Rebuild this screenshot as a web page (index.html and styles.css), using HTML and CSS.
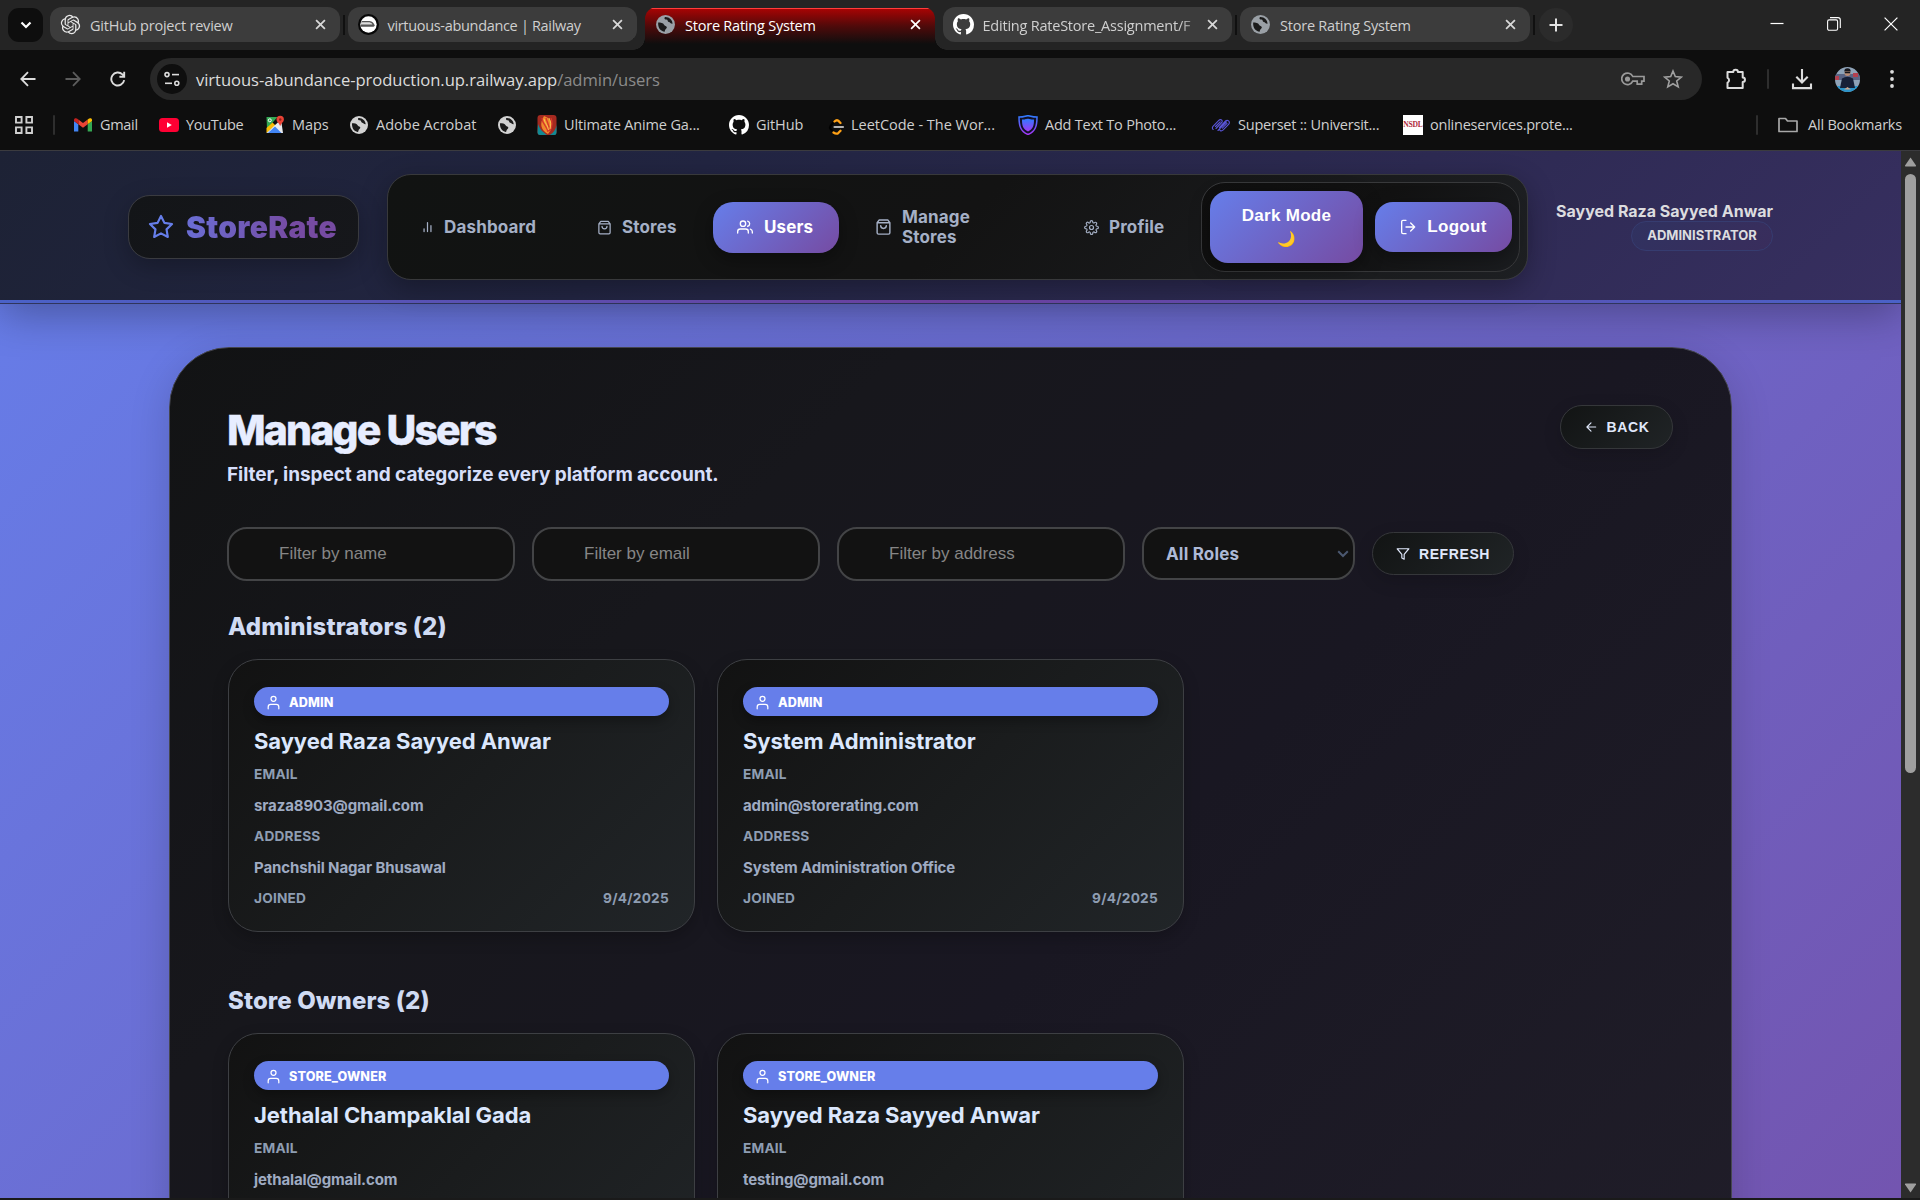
FILE: index.html
```html
<!DOCTYPE html>
<html lang="en">
<head>
<meta charset="utf-8">
<title>Store Rating System</title>
<link rel="stylesheet" href="styles.css">
</head>
<body>
<svg class="defs" width="0" height="0" aria-hidden="true">
  <defs>
    <linearGradient id="shieldFill" x1="0" y1="0" x2="0" y2="1"><stop offset="0" stop-color="#2f7bff"/><stop offset="1" stop-color="#a436f5"/></linearGradient>
  </defs>
  <symbol id="close" viewBox="0 0 12 12"><path d="M1.2 1.2l9.6 9.6M10.8 1.2l-9.6 9.6" fill="none" stroke="currentColor" stroke-width="1.9"/></symbol>
  <symbol id="globe" viewBox="0 0 20 20"><circle cx="10" cy="10" r="9" fill="currentColor"/><path d="M3 8.200c2.200 0 5 .3 5.600 2 .5 1.500 2.500.8 2.700 2.400.1 1.300-1.500 1.600-1.800 2.800-.2.900-.2 1.500-.8 1.500C5 16.200 2.700 13 3 8.200zM9.300 3c-.8 1.400.1 2.300 1.500 2.300 1.600 0 .9 2 2.300 2.400 1.400.3 1.700 1.700 3.600 1.500C16.500 5.800 13.500 2.600 9.300 3z" fill="#1b1b1b"/></symbol>
  <symbol id="github" viewBox="0 0 16 16"><path fill="currentColor" d="M8 0C3.580 0 0 3.580 0 8c0 3.540 2.290 6.530 5.470 7.590.4.070.55-.17.55-.38 0-.19-.01-.82-.01-1.490-2.010.37-2.530-.49-2.690-.94-.09-.23-.48-.94-.82-1.130-.28-.15-.68-.52-.01-.53.63-.01 1.080.58 1.230.82.72 1.210 1.870.87 2.330.66.070-.52.28-.87.51-1.070-1.780-.2-3.640-.89-3.640-3.950 0-.87.31-1.590.82-2.150-.08-.2-.36-1.020.08-2.120 0 0 .67-.21 2.200.82.64-.18 1.320-.27 2-.27s1.360.09 2 .27c1.530-1.040 2.200-.82 2.200-.82.44 1.100.16 1.920.08 2.120.51.56.82 1.270.82 2.150 0 3.070-1.870 3.750-3.650 3.950.29.25.54.73.54 1.480 0 1.070-.01 1.930-.01 2.200 0 .21.15.46.55.38A8.010 8.010 0 0 0 16 8c0-4.420-3.580-8-8-8z"/></symbol>
  <symbol id="bag" viewBox="0 0 24 24"><path d="M6 2 3 6v14a2 2 0 0 0 2 2h14a2 2 0 0 0 2-2V6l-3-4zM3 6h18M16 10a4 4 0 0 1-8 0" fill="none" stroke="currentColor" stroke-width="2" stroke-linecap="round" stroke-linejoin="round"/></symbol>
  <symbol id="person" viewBox="0 0 24 24"><path d="M20.500 22v-3a4 4 0 0 0-4-4h-9a4 4 0 0 0-4 4v3M16 6a4 4 0 1 1-8 0 4 4 0 0 1 8 0z" fill="none" stroke="currentColor" stroke-width="2" stroke-linecap="round" stroke-linejoin="round"/></symbol>
</svg>

<div class="browser">
  <div class="tabstrip">
    <div class="tab-search"><svg width="12" height="8" viewBox="0 0 12 8"><path d="M1.500 1.500 6 6l4.500-4.500" fill="none" stroke="#fff" stroke-width="2.200"/></svg></div>
    <div class="tabs">
      <div class="tab">
        <svg class="fav" viewBox="-1 -1 26 26"><path fill="#e8e8e8" d="M22.2819 9.8211a5.9847 5.9847 0 0 0-.5157-4.9108 6.0462 6.0462 0 0 0-6.5098-2.9A6.0651 6.0651 0 0 0 4.9807 4.1818a5.9847 5.9847 0 0 0-3.9977 2.9 6.0462 6.0462 0 0 0 .7427 7.0966 5.98 5.98 0 0 0 .511 4.9107 6.051 6.051 0 0 0 6.5146 2.9001A5.9847 5.9847 0 0 0 13.2599 24a6.0557 6.0557 0 0 0 5.7718-4.2058 5.9894 5.9894 0 0 0 3.9977-2.9001 6.0557 6.0557 0 0 0-.7475-7.0729zm-9.022 12.6081a4.4755 4.4755 0 0 1-2.8764-1.0408l.1419-.0804 4.7783-2.7582a.7948.7948 0 0 0 .3927-.6813v-6.7369l2.02 1.1686a.071.071 0 0 1 .038.052v5.5826a4.504 4.504 0 0 1-4.4945 4.4944zm-9.6607-4.1254a4.4708 4.4708 0 0 1-.5346-3.0137l.142.0852 4.783 2.7582a.7712.7712 0 0 0 .7806 0l5.8428-3.3685v2.3324a.0804.0804 0 0 1-.0332.0615L9.74 19.9502a4.4992 4.4992 0 0 1-6.1408-1.6464zM2.3408 7.8956a4.485 4.485 0 0 1 2.3655-1.9728V11.6a.7664.7664 0 0 0 .3879.6765l5.8144 3.3543-2.0201 1.1685a.0757.0757 0 0 1-.071 0l-4.8303-2.7865A4.504 4.504 0 0 1 2.3408 7.872zm16.5963 3.8558L13.1038 8.364 15.1192 7.2a.0757.0757 0 0 1 .071 0l4.8303 2.7913a4.4944 4.4944 0 0 1-.6765 8.1042v-5.6772a.79.79 0 0 0-.407-.667zm2.0107-3.0231l-.142-.0852-4.7735-2.7818a.7759.7759 0 0 0-.7854 0L9.409 9.2297V6.8974a.0662.0662 0 0 1 .0284-.0615l4.8303-2.7866a4.4992 4.4992 0 0 1 6.6802 4.66zM8.3065 12.863l-2.02-1.1638a.0804.0804 0 0 1-.038-.0567V6.0742a4.4992 4.4992 0 0 1 7.3757-3.4537l-.142.0805L8.704 5.459a.7948.7948 0 0 0-.3927.6813zm1.0976-2.3654l2.602-1.4998 2.6069 1.4998v2.9994l-2.5974 1.4997-2.6067-1.4997Z"/></svg>
        <span class="tab-title">GitHub project review</span><svg class="tab-close"><use href="#close"/></svg>
      </div>
      <div class="tab divided">
        <svg class="fav" viewBox="0 0 20 20"><circle cx="10" cy="10" r="10" fill="#080808"/><circle cx="10" cy="10" r="7.800" fill="#fff"/><path d="M3.500 6.700h7.500q4 .6 5 4.500l-1.200.9H2.300z" fill="#555"/><path d="M3.200 7.900h7.800q2.500.7 2.800 2.200H2.500z" fill="#ddd"/></svg>
        <span class="tab-title t-tight">virtuous-abundance | Railway</span><svg class="tab-close"><use href="#close"/></svg>
      </div>
      <div class="tab active">
        <svg class="fav grey"><use href="#globe"/></svg>
        <span class="tab-title">Store Rating System</span><svg class="tab-close"><use href="#close"/></svg>
      </div>
      <div class="tab">
        <svg class="fav white"><use href="#github"/></svg>
        <span class="tab-title fade">Editing RateStore_Assignment/F</span><svg class="tab-close"><use href="#close"/></svg>
      </div>
      <div class="tab divided">
        <svg class="fav grey"><use href="#globe"/></svg>
        <span class="tab-title">Store Rating System</span><svg class="tab-close"><use href="#close"/></svg>
      </div>
    </div>
    <div class="new-tab"><svg width="14" height="14" viewBox="0 0 14 14"><path d="M7 .5v13M.5 7h13" stroke="#e3e3e3" stroke-width="2"/></svg></div>
    <div class="window-buttons">
      <svg width="14" height="16" viewBox="0 0 14 16"><path d="M.5 7.500h13" stroke="#fff" stroke-width="1.200"/></svg>
      <svg width="14" height="14" viewBox="0 0 14 14"><rect x=".6" y="2.900" width="10" height="10.300" rx="1.500" fill="none" stroke="#fff" stroke-width="1.100"/><path d="M3 .6h8a2.300 2.300 0 0 1 2.300 2.300v8" fill="none" stroke="#fff" stroke-width="1.100"/></svg>
      <svg width="14" height="14" viewBox="0 0 14 14"><path d="M.6.6l12.800 12.800M13.400.6.6 13.400" stroke="#fff" stroke-width="1.200"/></svg>
    </div>
  </div>

  <div class="toolbar">
    <div class="nav-buttons">
      <svg width="16" height="16" viewBox="0 0 16 16"><path d="M15.500 8H1.500M8 1.200 1.300 8 8 14.800" fill="none" stroke="#dcdcdc" stroke-width="1.800"/></svg>
      <svg width="16" height="16" viewBox="0 0 16 16"><path d="M.5 8h14M8 1.200 14.700 8 8 14.800" fill="none" stroke="#5c5c5c" stroke-width="1.800"/></svg>
      <svg width="16" height="16" viewBox="0 0 16 16"><path d="M14.200 9.200A6.500 6.500 0 1 1 12.400 3.400L14.200 5.200M14.200.8v4.900H9.400" fill="none" stroke="#dcdcdc" stroke-width="1.900"/></svg>
    </div>
    <div class="omnibox">
      <div class="site-info"><svg width="16" height="16" viewBox="0 0 16 16" fill="none" stroke="#dcdcdc" stroke-width="1.600"><circle cx="3" cy="3.600" r="2"/><path d="M8 3.600h7"/><circle cx="12.800" cy="12.300" r="2"/><path d="M1 12.300h7"/></svg></div>
      <div class="url">virtuous-abundance-production.up.railway.app<span class="path">/admin/users</span></div>
      <svg class="key" width="24" height="16" viewBox="0 0 24 16" fill="none" stroke="#9a9a9a" stroke-width="1.700"><path d="M11.800 5.500H23v4.700h-2.300v3h-4.500v-3h-4.400a5.800 5.800 0 1 1 0-4.700z"/><circle cx="6.500" cy="8" r="1.700" fill="#9a9a9a"/></svg>
      <svg class="star" width="20" height="20" viewBox="0 0 20 20"><path d="m10 2 2.300 5.600 6 .5-4.600 3.900 1.500 5.900L10 14.700l-5.200 3.200L6.300 12 1.700 8.100l6-.5z" fill="none" stroke="#a0a0a0" stroke-width="1.600"/></svg>
    </div>
    <div class="actions">
      <svg width="22" height="22" viewBox="0 0 22 22"><path d="M2.500 4h5.800a2.300 2.300 0 0 1 4.600 0h4.800v5.500a2.200 2.200 0 0 1 0 4.500v6H2.500v-5.300a2.700 2.700 0 0 0 0-4.900z" fill="none" stroke="#dcdcdc" stroke-width="2" stroke-linejoin="round"/></svg>
      <span class="bar"></span>
      <svg width="22" height="22" viewBox="0 0 22 22"><path d="M11 1v13M5.300 8.700 11 14.400l5.700-5.700M2 15.500v4.600h18v-4.600" fill="none" stroke="#dcdcdc" stroke-width="2.100"/></svg>
      <svg class="avatar" width="25" height="25" viewBox="0 0 25 25"><clipPath id="av"><circle cx="12.500" cy="12.500" r="12.500"/></clipPath><g clip-path="url(#av)"><path d="M0 0h25v25H0z" fill="#8fa3b8"/><path d="M0 7h25v6H0z" fill="#5a6484"/><path d="M0 9h4v4H0zM18 6h5v4h-5z" fill="#b3404f"/><path d="M0 19h25v6H0z" fill="#2b93c9"/><path d="M7 11.500q5.500-3.500 11 0l2 9.500H5z" fill="#172038"/><circle cx="12.500" cy="6" r="3" fill="#b98d76"/><path d="M9.300 4.500a3.200 3.200 0 0 1 6.400 0zM9.800 5h5.400v1.300H9.800z" fill="#17171c"/><path d="M9 22.500l3.500-2.500 3.500 2.500z" fill="#c9a58e"/></g></svg>
      <svg width="6" height="20" viewBox="0 0 6 20" fill="#dcdcdc"><circle cx="3" cy="2.800" r="1.900"/><circle cx="3" cy="10" r="1.900"/><circle cx="3" cy="17" r="1.900"/></svg>
    </div>
  </div>

  <div class="bookmarks">
    <svg class="apps" width="18" height="18" viewBox="0 0 18 18" fill="none" stroke="#d0d0d0" stroke-width="1.900"><path d="M1 1h5.600v5.600H1zM11.400 1H17v5.600h-5.600zM1 11.400h5.600V17H1zM11.400 11.400H17V17h-5.600z"/></svg>
    <span class="bar"></span>
    <div class="bm bm-gmail"><svg viewBox="0 0 20 20"><path d="M1 16.500V6l4.300 3.200v7.300z" fill="#4285f4"/><path d="M14.700 16.500V9.200L19 6v10.500z" fill="#34a853"/><path d="M5.300 9.200V4.500L10 8l4.700-3.500v4.700L10 12.700z" fill="#ea4335"/><path d="M1 6V5c0-2 2.200-2.500 4.300-.5v4.700z" fill="#c5221f"/><path d="M19 6V5c0-2-2.200-2.500-4.300-.5v4.700z" fill="#fbbc04"/></svg><span>Gmail</span></div>
    <div class="bm bm-youtube"><svg viewBox="0 0 20 20"><rect x="0" y="3" width="20" height="14" rx="3.500" fill="#ff0033"/><path d="M8 7.200v5.600l4.800-2.800z" fill="#fff"/></svg><span>YouTube</span></div>
    <div class="bm bm-maps"><svg viewBox="0 0 20 20"><path d="M1.500 2h11L2 14z" fill="#34a853"/><path d="M1.500 18V13l6-5.500 3 3z" fill="#fbbc04"/><path d="M1.500 18 16 4.500 18 18z" fill="#e8eaed"/><path d="M3 18l7-6.500 6.500 6.500z" fill="#4285f4"/><circle cx="4.800" cy="5.300" r="1.500" fill="none" stroke="#fff"/><path d="M11.500 4.500a3.700 3.700 0 0 1 7.400 0c0 2.500-2.700 3.500-3.700 6.800-1-3.300-3.700-4.300-3.700-6.800z" fill="#ea4335"/><circle cx="15.200" cy="4.500" r="1.200" fill="#8c1d18"/></svg><span>Maps</span></div>
    <div class="bm bm-adobe"><svg class="light"><use href="#globe"/></svg><span>Adobe Acrobat</span></div>
    <div class="bm bm-blank"><svg class="light"><use href="#globe"/></svg></div>
    <div class="bm bm-anime"><svg viewBox="0 0 20 20"><rect x=".5" width="19" height="20" rx="3" fill="#a52a20"/><path d="M1 9c2 6 5 8 9 11H3q-2.500 0-2.500-3zM19.500 8c0 6-3 10-7 12h5q2 0 2-3z" fill="#128a94"/><path d="M7 1c8 3 11 9 4 18C4 15 2 9 7 1z" fill="#f08a2c"/><path d="M5 3c0 6 5 8 6 14M9 3c1 5 4 7 3 13M14 3c2 5 1 9-1 13" stroke="#d8372a" stroke-width="1.300" fill="none"/><path d="M7 4c1 5 4 6 4.500 11M12 3c2 4 2 7 1 11" stroke="#f9d05a" stroke-width=".8" fill="none"/></svg><span>Ultimate Anime Ga...</span></div>
    <div class="bm bm-github"><svg class="white"><use href="#github"/></svg><span>GitHub</span></div>
    <div class="bm bm-leet"><svg viewBox="0 0 20 20"><path d="M8 5.500 3.500 11q-1 1.500 0 3L7 17.500" stroke="#000" stroke-width="2.200" fill="none"/><path d="M7.500 6.500q2-2 3.800-.8L13.500 8M6.500 17.500q3 2.200 5 .3l2-2" stroke="#ffa116" stroke-width="2.300" fill="none" stroke-linecap="round"/><path d="M7.500 12H16" stroke="#b3b3b3" stroke-width="2.200" stroke-linecap="round"/></svg><span>LeetCode - The Wor...</span></div>
    <div class="bm bm-text"><svg viewBox="0 0 20 20"><path d="M1 2c6 0 6-1.300 9-1.300S13 2 19 2c0 9-1.500 14.500-9 17.500C2.500 16.500 1 11 1 2z" fill="#101026" stroke="url(#shieldFill)" stroke-width="1.500"/><path d="M4 4.500c4 0 4.500-.8 6-.8s2 .8 6 .8c0 6.500-1 9.500-6 12-5-2.500-6-5.500-6-12z" fill="url(#shieldFill)"/></svg><span>Add Text To Photo...</span></div>
    <div class="bm bm-superset"><svg viewBox="0 0 20 20" fill="none" stroke="#5a55d8" stroke-width="1.100" stroke-linecap="round"><path d="M5 13.500l5.800-6q1-1.800-.6-2.700-1.300-.5-2.400.6L2 11.300q-1.400 1.800.2 3.200M4.500 11.500l4.700-4.700M7 15.500l7-7.300M8.500 12.300l6-6.300q1.600-1.300 3.100-.1 1.500 1.500.2 3.200L12 15q-1.200 1.400-2.700.7-1.300-1.200 0-2.700l6-6M11.300 13.200l4.700-4.800"/></svg><span>Superset :: Universit...</span></div>
    <div class="bm bm-nsdl"><svg viewBox="0 0 20 20"><path d="M0 0h20v20H0z" fill="#fff"/><text x=".3" y="12" textLength="19.400" lengthAdjust="spacingAndGlyphs" font-family="Liberation Serif, serif" font-weight="700" font-size="8" fill="#b02c40">NSDL</text></svg><span>onlineservices.prote...</span></div>
    <div class="all-bookmarks"><span class="bar"></span><svg width="20" height="20" viewBox="0 0 20 20"><path d="M1 3.500h6.500L9.500 6H19v10.500H1z" fill="none" stroke="#a8a8a8" stroke-width="1.700" stroke-linejoin="round"/></svg><span>All Bookmarks</span></div>
  </div>
</div>

<div class="viewport">
  <div class="page">
    <header class="header">
      <div class="logo">
        <svg width="26" height="26" viewBox="0 0 24 24"><path d="m12 1.800 3.150 6.380 7.050 1.030-5.100 4.970 1.200 7.020L12 17.890 5.700 21.200l1.200-7.020L1.800 9.210l7.050-1.030z" fill="none" stroke="#667eea" stroke-width="2" stroke-linejoin="round"/></svg>
        <span class="brand">StoreRate</span>
      </div>
      <nav class="nav">
        <a class="nav-item dashboard"><svg width="15" height="15" viewBox="0 0 24 24"><path d="M12 18.500V4M17.500 18.500V9M6.500 18.500v-4.500" fill="none" stroke="currentColor" stroke-width="2" stroke-linecap="round"/></svg>Dashboard</a>
        <a class="nav-item stores"><svg width="15" height="15"><use href="#bag"/></svg>Stores</a>
        <a class="nav-item current"><svg width="16" height="16" viewBox="0 0 24 24"><path d="M17 21v-2a4 4 0 0 0-4-4H5a4 4 0 0 0-4 4v2M13 7a4 4 0 1 1-8 0 4 4 0 0 1 8 0zM23 21v-2a4 4 0 0 0-3-3.870M16 3.130a4 4 0 0 1 0 7.750" fill="none" stroke="currentColor" stroke-width="2" stroke-linecap="round" stroke-linejoin="round"/></svg>Users</a>
        <a class="nav-item manage"><svg width="17" height="18"><use href="#bag"/></svg><span>Manage<br>Stores</span></a>
        <a class="nav-item profile"><svg width="15" height="15" viewBox="0 0 24 24" fill="none" stroke="currentColor" stroke-width="1.900"><circle cx="12" cy="12" r="3.200"/><path d="M19.400 15a1.650 1.650 0 0 0 .33 1.820l.06.060a2 2 0 1 1-2.830 2.830l-.06-.06a1.650 1.650 0 0 0-2.800 1.170V21a2 2 0 1 1-4 0v-.09A1.650 1.650 0 0 0 7.180 19.730l-.06.060a2 2 0 1 1-2.830-2.830l.06-.06A1.650 1.650 0 0 0 3.180 14H3a2 2 0 1 1 0-4h.09a1.650 1.650 0 0 0 1.180-2.820l-.06-.06a2 2 0 1 1 2.830-2.830l.06.060A1.650 1.650 0 0 0 10 3.180V3a2 2 0 1 1 4 0v.09a1.650 1.650 0 0 0 2.820 1.180l.06-.06a2 2 0 1 1 2.830 2.830l-.06.060A1.650 1.650 0 0 0 20.820 10H21a2 2 0 1 1 0 4h-.09a1.650 1.650 0 0 0-1.510 1z"/></svg>Profile</a>
        <div class="session">
          <button class="grad-btn theme">Dark Mode<br><span class="moon">🌙</span></button>
          <button class="grad-btn logout"><svg width="16" height="16" viewBox="0 0 24 24"><path d="M9 22H4.500a2 2 0 0 1-2-2V4a2 2 0 0 1 2-2H9M16 18l6-6-6-6M22 12H9" fill="none" stroke="currentColor" stroke-width="2" stroke-linecap="round" stroke-linejoin="round"/></svg>Logout</button>
        </div>
      </nav>
      <div class="user">
        <div class="user-name">Sayyed Raza Sayyed Anwar</div>
        <div class="user-role">ADMINISTRATOR</div>
      </div>
    </header>

    <main class="panel">
      <div class="panel-head">
        <div>
          <h1>Manage Users</h1>
          <p class="subtitle">Filter, inspect and categorize every platform account.</p>
        </div>
        <button class="ghost-btn back"><svg width="14" height="14" viewBox="0 0 24 24"><path d="M20 12H5M12 19l-7-7 7-7" fill="none" stroke="currentColor" stroke-width="2" stroke-linecap="round" stroke-linejoin="round"/></svg>BACK</button>
      </div>
      <div class="filters">
        <input type="text" placeholder="Filter by name">
        <input type="text" placeholder="Filter by email">
        <input type="text" placeholder="Filter by address">
        <div class="select">All Roles<svg width="12" height="8" viewBox="0 0 12 8"><path d="M1.200 1.200 6 6l4.800-4.800" fill="none" stroke="#4b5870" stroke-width="2"/></svg></div>
        <button class="ghost-btn refresh"><svg width="14" height="14" viewBox="0 0 24 24"><path d="M22 3H2l8 9.460V19l4 2v-8.540z" fill="none" stroke="currentColor" stroke-width="2" stroke-linejoin="round"/></svg>REFRESH</button>
      </div>

      <section class="group">
        <h2>Administrators (2)</h2>
        <div class="cards">
          <article class="card">
            <div class="badge"><svg width="15" height="15"><use href="#person"/></svg>ADMIN</div>
            <h3>Sayyed Raza Sayyed Anwar</h3>
            <div class="row label">EMAIL</div><div class="row value">sraza8903@gmail.com</div>
            <div class="row label">ADDRESS</div><div class="row value">Panchshil Nagar Bhusawal</div>
            <div class="row label split"><span>JOINED</span><span class="date">9/4/2025</span></div>
          </article>
          <article class="card">
            <div class="badge"><svg width="15" height="15"><use href="#person"/></svg>ADMIN</div>
            <h3>System Administrator</h3>
            <div class="row label">EMAIL</div><div class="row value">admin@storerating.com</div>
            <div class="row label">ADDRESS</div><div class="row value">System Administration Office</div>
            <div class="row label split"><span>JOINED</span><span class="date">9/4/2025</span></div>
          </article>
        </div>
      </section>

      <section class="group">
        <h2>Store Owners (2)</h2>
        <div class="cards">
          <article class="card">
            <div class="badge"><svg width="15" height="15"><use href="#person"/></svg>STORE_OWNER</div>
            <h3>Jethalal Champaklal Gada</h3>
            <div class="row label">EMAIL</div><div class="row value">jethalal@gmail.com</div>
          </article>
          <article class="card">
            <div class="badge"><svg width="15" height="15"><use href="#person"/></svg>STORE_OWNER</div>
            <h3>Sayyed Raza Sayyed Anwar</h3>
            <div class="row label">EMAIL</div><div class="row value">testing@gmail.com</div>
          </article>
        </div>
      </section>
    </main>
  </div>
  <div class="scrollbar">
    <svg width="13" height="10" viewBox="0 0 13 10"><path d="M6.500.5 12 8.500q.3 1-.7 1H1.700q-1 0-.7-1z" fill="#9f9f9f"/></svg>
    <div class="thumb"></div>
    <svg class="down" width="13" height="10" viewBox="0 0 13 10"><path d="M6.500 9.500 12 1.500q.3-1-.7-1H1.700q-1 0-.7 1z" fill="#9f9f9f"/></svg>
  </div>
</div>
</body>
</html>
```
FILE: styles.css
```css
* { box-sizing: border-box; }
body {
  margin: 0;
  width: 1920px;
  height: 1200px;
  overflow: hidden;
  background: #1a1a1a;
  font-family: Inter, "Liberation Sans", sans-serif;
}
svg { display: block; flex: none; }
.defs { position: absolute; }
h1, h2, h3, p { margin: 0; }

/* Browser window */
.browser {
  height: 151px;
  background: #0e0e0e;
  border-bottom: 1px solid #3b3b3f;
  font: 14.5px/20px "Open Sans", "Noto Sans", sans-serif;
  letter-spacing: -0.22px;
  color: #d8d8d8;
}
.tabstrip { display: flex; height: 50px; background: #242424; padding-left: 8px; }
.tab-search {
  width: 35px; height: 34px; margin: 8px 7px 0 0;
  border-radius: 11px; background: #0e0e0e;
  display: flex; align-items: center; justify-content: center;
}
.tabs { display: flex; gap: 8px; padding-top: 7px; }
.tab {
  position: relative;
  width: 289.500px; height: 35px;
  border-radius: 12px;
  background: #3c3c3c;
  display: flex; align-items: center;
  padding: 0 14px 0 10px;
  white-space: nowrap;
  color: #cfcfcf;
}
.tab.divided::before, .tab:last-child::after {
  content: ""; position: absolute; top: 8px; left: -5px;
  width: 2px; height: 20px; background: #101010;
}
.tab:last-child::after { left: auto; right: -5px; }
.fav { width: 21px; height: 21px; margin-right: 9px; }
.grey { color: #9aa0a6; }
.white { color: #fff; }
.light { color: #d2d2d2; }
.tab-title { flex: 1; padding-top: 2px; }
.t-tight { letter-spacing: -0.320px; }
.fade { -webkit-mask-image: linear-gradient(90deg, #000 88%, rgba(0, 0, 0, .1) 97%); mask-image: linear-gradient(90deg, #000 88%, rgba(0, 0, 0, .1) 97%); }
.tab-close { width: 11px; height: 11px; color: #d8d8d8; }
.tab.active {
  height: 43px; padding-bottom: 8px;
  border-radius: 12px 12px 0 0;
  background: linear-gradient(#0000 1px, #ff3b3b 1px, #ff3b3b 2px, #a60404 2px, #500a0a 19px, #0e0e0e 37px);
  color: #fff;
}
.tab.active .tab-close { color: #fff; }
.tab.active::before, .tab.active::after {
  content: ""; position: absolute; bottom: 0; width: 12px; height: 12px;
}
.tab.active::before { left: -12px; background: radial-gradient(circle at 0 0, #242424 11.500px, #0e0e0e 12px); }
.tab.active::after { right: -12px; background: radial-gradient(circle at 100% 0, #242424 11.500px, #0e0e0e 12px); }
.new-tab {
  width: 34px; height: 34px; margin: 8px 0 0 9px; border-radius: 17px; background: #2b2b2b;
  display: flex; align-items: center; justify-content: center;
}
.window-buttons { margin: 0 22px 0 auto; display: flex; align-items: center; gap: 43px; height: 48px; }

.toolbar { display: flex; align-items: center; height: 58px; padding-left: 20px; }
.nav-buttons { display: flex; gap: 29px; width: 130px; }
.omnibox {
  width: 1552px; height: 42px; border-radius: 21px; background: #282828;
  display: flex; align-items: center; padding: 0 19px 0 7px;
}
.site-info {
  width: 30px; height: 30px; border-radius: 50%; background: #0e0e0e; margin-right: 9px;
  display: flex; align-items: center; justify-content: center;
}
.url { flex: 1; padding-top: 1px; font-size: 16.600px; letter-spacing: -0.060px; color: #dcdcdc; }
.path { color: #8b8b8b; }
.star { margin-left: 18px; }
.actions { flex: 1; display: flex; align-items: center; padding-left: 23px; }
.bar { width: 2px; height: 20px; background: #2e2e2e; border-radius: 1px; }
.actions .bar { margin: 0 22px 0 20px; }
.actions .avatar { margin: 0 29px 0 22px; }

.bookmarks { display: flex; align-items: center; height: 34px; padding-left: 15px; white-space: nowrap; color: #cfcfcf; }
.bookmarks .apps { margin-right: 20px; }
.bookmarks > .bar { margin-right: 18px; }
.bm { display: flex; align-items: center; gap: 7px; }
.bm svg { width: 20px; height: 20px; }
.bm-gmail { width: 86px; letter-spacing: -0.300px; }
.bm-youtube { width: 106px; letter-spacing: -0.320px; }
.bm-maps { width: 84px; letter-spacing: -.1px; }
.bm-adobe { width: 148px; letter-spacing: 0; }
.bm-blank { width: 40px; }
.bm-anime { width: 192px; letter-spacing: -.150px; }
.bm-github { width: 98px; letter-spacing: -.1px; }
.bm-leet { width: 191px; letter-spacing: -0.020px; gap: 4px; }
.bm-text { width: 193px; }
.bm-superset { width: 192px; letter-spacing: -0.230px; }
.bm-nsdl { letter-spacing: -0.230px; }
.all-bookmarks { margin: 0 18px 0 auto; display: flex; align-items: center; letter-spacing: -0.200px; }
.all-bookmarks svg { margin: 0 10px 0 20px; }

/* Page */
.viewport { display: flex; height: 1047px; overflow: hidden; }
.page {
  width: 1901px; height: 1047px; overflow: hidden;
  background: linear-gradient(135deg, #667eea 0%, #764ba2 100%) 0 0 / 1901px 1750px no-repeat;
}
.header {
  position: relative;
  height: 153px; padding: 0 128px;
  display: flex; align-items: center; gap: 28px;
  border-bottom: 1px solid #30355c;
  background: linear-gradient(135deg, #1d2235 0%, #222542 35%, #2d2a52 70%, #372f60 100%);
  box-shadow: 0 10px 40px rgba(0, 0, 0, .3);
}
.header::after {
  content: ""; position: absolute; left: 0; right: 0; bottom: 0; height: 3px;
  background: linear-gradient(90deg, #4a62c8, #6b3f9c, #4a62c8);
}
.logo {
  width: 231px; height: 64px; border-radius: 22px;
  border: 1px solid #3a3b40; background: linear-gradient(135deg, #131518, #16171b);
  box-shadow: 0 8px 24px rgba(0, 0, 0, .25);
  display: flex; align-items: center; gap: 12px; padding: 0 0 1px 19px;
}
.brand {
  padding-top: 1px;
  font-size: 30px; font-weight: 900; line-height: 40px; letter-spacing: .3px;
  background: linear-gradient(100deg, #6a6fd6 0%, #764ba2 70%);
  -webkit-background-clip: text; background-clip: text; color: transparent;
}
.nav {
  width: 1141px; height: 106px; border-radius: 24px; padding: 0 7px;
  border: 1px solid #38393b; background: linear-gradient(135deg, #111312 0%, #131313 50%, #1e2023 100%);
  box-shadow: 0 8px 28px rgba(0, 0, 0, .3);
  display: flex; align-items: center; gap: 11px;
}
.nav-item {
  height: 51px; padding: 0 25px; border-radius: 20px;
  display: flex; align-items: center; gap: 9px;
  font-size: 17px; font-weight: 700; line-height: 20px; letter-spacing: .160px; color: #a5b0c6;
}
.nav-item.dashboard { width: 166px; }
.nav-item.stores { width: 130px; gap: 10px; }
.nav-item.current {
  width: 126px; color: #fff; letter-spacing: .1px; gap: 11px; padding: 0 24px;
  background: linear-gradient(135deg, #667eea, #764ba2);
  box-shadow: 0 6px 18px rgba(0, 0, 0, .35);
}
.nav-item.manage { width: 198px; gap: 10px; }
.nav-item.profile { width: 131px; gap: 10px; }
.session {
  width: 319px; height: 90px; margin-left: auto; padding: 0 7px 0 8px;
  border: 1px solid #38393b; border-radius: 24px;
  background: linear-gradient(135deg, #0f0f0f 0%, #121212 50%, #1b1d20 100%);
  display: flex; align-items: center; justify-content: space-between;
}
button { font-family: inherit; border: 0; padding: 0; }
.grad-btn {
  font: 700 17px/23px "Liberation Sans", Arial, sans-serif; letter-spacing: .3px; color: #fff;
  background: linear-gradient(135deg, #667eea, #764ba2); border-radius: 18px;
  box-shadow: 0 6px 20px rgba(0, 0, 0, .35);
}
.theme { width: 153px; height: 72px; }
.moon { font-size: 15px; font-family: "Noto Color Emoji", sans-serif; }
.logout { width: 137px; height: 50px; padding-bottom: 1px; display: flex; align-items: center; justify-content: center; gap: 11px; }
.user { width: 217px; padding-bottom: 2px; display: flex; flex-direction: column; align-items: flex-end; color: #dcdcdf; }
.user-name { font-size: 16px; font-weight: 700; line-height: 20px; letter-spacing: 0; white-space: nowrap; }
.user-role {
  width: 142px; height: 30px; border-radius: 15px; border: 1px solid #363c70;
  background: linear-gradient(135deg, #303260, #392d5c);
  font-size: 13px; font-weight: 700; line-height: 27px; text-align: center;
}

.panel {
  width: 1563px; height: 1400px; margin: 43px 0 0 169px; padding: 57px 58px 0 57px;
  border: 1px solid #45464f; border-radius: 60px;
  background: linear-gradient(135deg, #121314 0%, #17171c 25%, #191722 50%, #23202c 100%);
  box-shadow: 0 10px 40px rgba(0, 0, 0, .16);
}
.panel-head { display: flex; justify-content: space-between; height: 122px; }
h1 { font-size: 41px; font-weight: 800; line-height: 50px; letter-spacing: -1.900px; color: #e7edff; -webkit-text-stroke: .4px #e7edff; }
.subtitle { margin-top: 6px; font-size: 19px; font-weight: 700; line-height: 28px; letter-spacing: -.070px; color: #d6defa; white-space: nowrap; }
.ghost-btn {
  display: flex; align-items: center; justify-content: center;
  border: 1px solid #35373a; border-radius: 22px;
  background: linear-gradient(135deg, #121414, #202426);
  box-shadow: 0 6px 18px rgba(0, 0, 0, .15);
  color: #e0e8fb; font: 700 14px/20px "Liberation Sans", Arial, sans-serif; letter-spacing: .6px;
}
.back { width: 113px; height: 44px; gap: 9px; }
.filters { display: flex; align-items: flex-start; height: 54px; }
input {
  width: 288px; height: 54px; margin-right: 17px; padding: 0 0 1px 50px;
  border: 2px solid #434446; border-radius: 20px; background: #121212;
  font: 17px "Liberation Sans", Arial, sans-serif; outline: 0;
}
input::placeholder { color: #868686; }
.select {
  width: 213px; height: 53px; margin-right: 17px; padding: 0 4px 0 22px;
  border: 2px solid #434446; border-radius: 20px; background: #121212;
  display: flex; align-items: center; justify-content: space-between;
  font-size: 17px; font-weight: 700; letter-spacing: .180px; color: #adb9d6;
}
.refresh { width: 142px; height: 43px; margin-top: 5px; gap: 9px; }

.group { height: 374px; }
.group h2 { padding: 29px 0 0 1px; height: 78px; font-size: 24px; font-weight: 800; line-height: 34px; letter-spacing: .080px; color: #d0dbf3; }
.cards { display: flex; gap: 22px; padding-left: 1px; }
.card {
  width: 467px; height: 273px; padding: 27px 25px 0;
  border: 1px solid #3d3f43; border-radius: 30px;
  background: linear-gradient(135deg, #121212 0%, #1a1c1d 50%, #212528 100%);
  box-shadow: 0 6px 16px rgba(0, 0, 0, .22);
}
.badge {
  height: 29px; border-radius: 15px; background: #667eea; color: #fff;
  display: flex; align-items: center; gap: 8px; padding: 1px 0 0 12px;
  font-size: 12.600px; font-weight: 800; letter-spacing: .12px;
  box-shadow: 0 5px 12px rgba(0, 0, 0, .3);
}
h3 { margin-top: 7px; font-size: 22px; font-weight: 700; line-height: 36px; letter-spacing: -.060px; color: #dbe7fd; }
.row { height: 31px; line-height: 31px; font-weight: 700; }
.label { font-size: 13.700px; line-height: 30px; letter-spacing: .180px; color: #8e9db2; }
.value { font-size: 15px; letter-spacing: -.110px; color: #9fabc2; }
.split { display: flex; justify-content: space-between; }
.date { letter-spacing: .250px; }

.scrollbar {
  width: 19px; height: 1047px; padding: 6px 0 5px; background: #2c2c2c;
  display: flex; flex-direction: column; align-items: center;
}
.thumb { width: 11px; height: 599px; margin-top: 7px; border-radius: 6px; background: #9f9f9f; }
.down { margin-top: auto; }
```
